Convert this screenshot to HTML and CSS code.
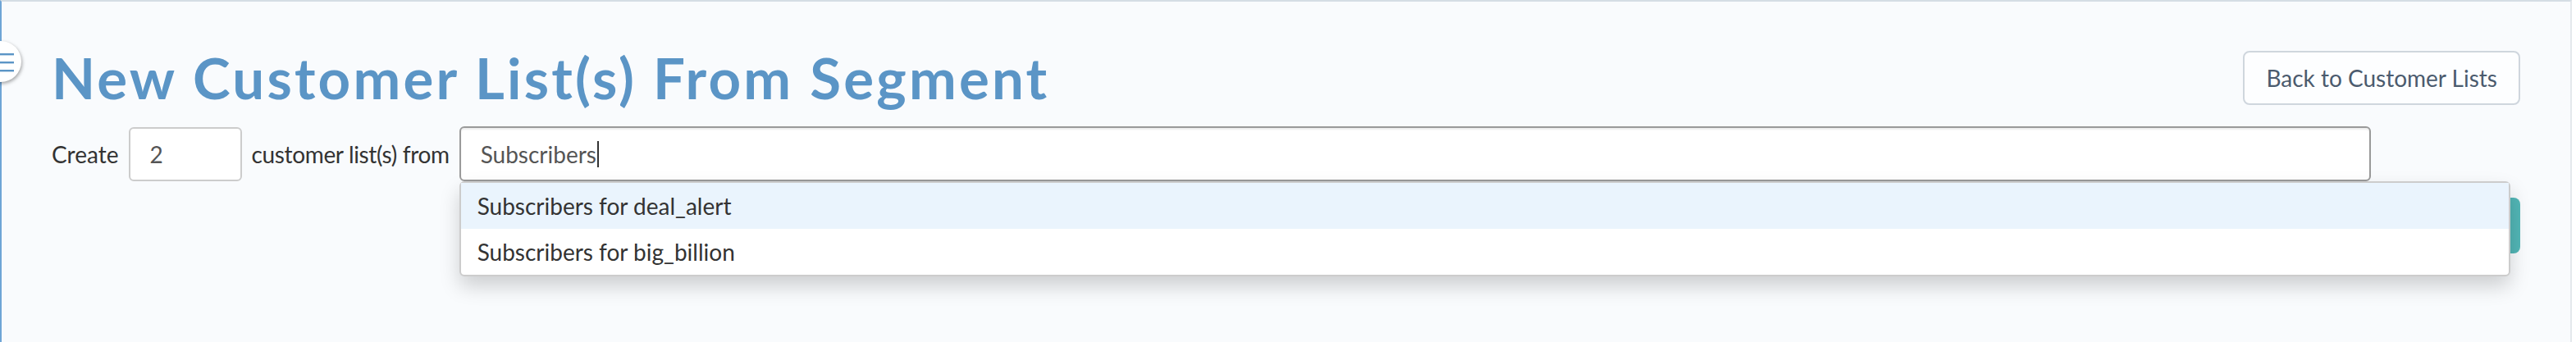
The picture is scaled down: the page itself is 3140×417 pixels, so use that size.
FILE: index.html
```html
<!DOCTYPE html>
<html lang="en">
<head>
<meta charset="utf-8">
<title>New Customer List(s) From Segment</title>
<link rel="stylesheet" href="styles.css">
</head>
<body>
<div class="frame">
  <div class="side-toggle" aria-label="Toggle menu">
    <svg class="side-toggle__icon" width="20" height="24" viewBox="0 0 20 24">
      <rect x="0" y="0" width="17" height="2.4" fill="#5b95c6"/>
      <rect x="0" y="10" width="17" height="2.4" fill="#5b95c6"/>
      <rect x="0" y="20" width="17" height="2.4" fill="#5b95c6"/>
    </svg>
  </div>
  <main class="page">
    <header class="page-header">
      <h1 class="page-title">New Customer List(s) From Segment</h1>
      <button class="btn btn-back" type="button">Back to Customer Lists</button>
    </header>
    <form class="create-row">
      <span class="label">Create</span>
      <input class="field field--num" type="text" value="2">
      <span class="label label--tight">customer list(s) from</span>
      <div class="typeahead">
        <div class="field field--search"><span class="field__text">Subscribers</span><span class="field__caret"></span></div>
        <ul class="typeahead__menu">
          <li class="typeahead__item is-active">Subscribers for deal_alert</li>
          <li class="typeahead__item">Subscribers for big_billion</li>
        </ul>
      </div>
    </form>
    <div class="actions">
      <button class="btn btn-primary" type="button">Create Lists</button>
    </div>
  </main>
</div>
</body>
</html>
```
FILE: styles.css
```css
html, body {
  margin: 0;
  padding: 0;
  background: #ffffff;
}
body {
  font-family: "Lato", "Open Sans", sans-serif;
}
.frame {
  position: relative;
  display: flex;
  height: 417px;
  overflow: hidden;
}
.page {
  width: 3135px;
  box-sizing: border-box;
  background: #f9fbfd;
  border-top: 2px solid #d5dde4;
  border-left: 2px solid #6fa5d6;
  border-right: 2px solid #e4e8ec;
  padding: 53px 61px 0 61px;
}
.side-toggle {
  position: absolute;
  left: -24px;
  top: 50px;
  width: 50px;
  height: 50px;
  border-radius: 50%;
  background: #ffffff;
  box-shadow: 1px 2px 4px rgba(0, 0, 0, 0.35);
  z-index: 5;
}
.side-toggle__icon {
  position: absolute;
  left: 24px;
  top: 15px;
}
.page-header {
  display: flex;
  justify-content: space-between;
  align-items: center;
}
.page-title {
  margin: 0;
  font-size: 69px;
  line-height: 80px;
  font-weight: 700;
  letter-spacing: 3.2px;
  color: #5b95c6;
}
.btn {
  font-family: inherit;
  font-size: 28px;
  cursor: pointer;
}
.btn-back {
  height: 66px;
  padding: 0 26px;
  border: 2px solid #cfd6dd;
  border-radius: 8px;
  background: #fdfeff;
  color: #4b5b6e;
}
.create-row {
  display: flex;
  align-items: center;
  gap: 12px;
  margin: 19px 182px 0 0;
}
.label {
  font-size: 28px;
  color: #333333;
}
.label--tight {
  letter-spacing: -0.35px;
}
.field {
  box-sizing: border-box;
  background: #ffffff;
  font-family: inherit;
  font-size: 28px;
  color: #555555;
}
.field--num {
  width: 138px;
  height: 66px;
  padding: 0 24px;
  border: 2px solid #cccccc;
  border-radius: 6px;
}
.typeahead {
  position: relative;
  flex: 1;
}
.field--search {
  height: 67px;
  padding: 0 24px;
  display: flex;
  align-items: center;
  border: 2px solid #9a9a9a;
  border-radius: 6px;
  box-shadow: inset 0 2px 2px rgba(0, 0, 0, 0.075);
}
.field__caret {
  width: 2px;
  height: 32px;
  margin-left: 1px;
  background: #333333;
}
.typeahead__menu {
  position: absolute;
  top: 100%;
  left: 0;
  width: 2500px;
  box-sizing: border-box;
  margin: 0;
  padding: 0;
  list-style: none;
  background: #ffffff;
  border: 2px solid #cccccc;
  border-radius: 6px;
  box-shadow: 0 12px 24px rgba(0, 0, 0, 0.175);
  z-index: 10;
}
.typeahead__item {
  height: 56px;
  display: flex;
  align-items: center;
  padding: 0 20px;
  font-size: 28px;
  color: #333333;
}
.typeahead__item.is-active {
  background: #eaf4fd;
}
.actions {
  display: flex;
  justify-content: flex-end;
  margin-top: 20px;
}
.btn-primary {
  width: 220px;
  height: 68px;
  border: 0;
  border-radius: 8px;
  background: #52b6b6;
  color: #ffffff;
}
```
